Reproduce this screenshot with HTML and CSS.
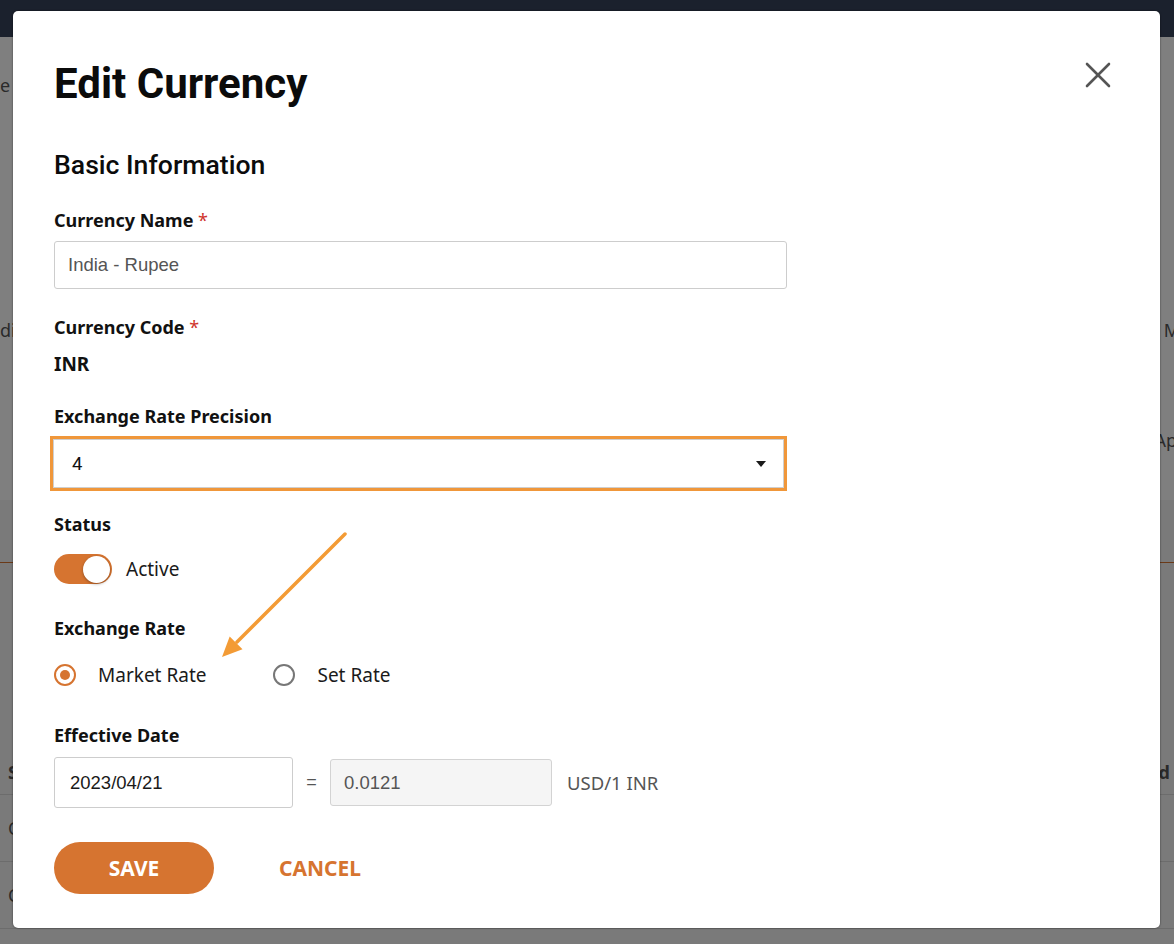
FILE: index.html
```html
<!DOCTYPE html>
<html lang="en">
<head>
<meta charset="utf-8">
<title>Edit Currency</title>
<link rel="stylesheet" href="styles.css">
</head>
<body>
<div class="page">
  <header class="topbar"></header>
  <section class="card">
    <div class="bg-row r1"><span>e</span></div>
    <div class="bg-row r2"><span>di</span><span>M</span></div>
    <div class="bg-row r3"><span></span><span>Ap</span></div>
  </section>
  <section class="lower">
    <div class="tabline"></div>
    <div class="thead"><span>S</span><span>d</span></div>
    <div class="trow"><span>C</span></div>
    <div class="trow"><span>C</span></div>
  </section>
</div>
<div class="overlay"></div>

<div class="modal">
  <div class="modal-head">
    <h1 class="title">Edit Currency</h1>
    <svg class="close" width="26" height="26" viewBox="0 0 26 26" aria-label="Close">
      <line x1="2" y1="2" x2="24" y2="24"/>
      <line x1="24" y1="2" x2="2" y2="24"/>
    </svg>
  </div>
  <h2 class="section-title">Basic Information</h2>

  <div class="label m-name">Currency Name <span class="req">*</span></div>
  <div class="input name-input">India - Rupee</div>

  <div class="label m-code">Currency Code <span class="req">*</span></div>
  <div class="value">INR</div>

  <div class="label m-prec">Exchange Rate Precision</div>
  <div class="select">
    <span>4</span>
    <span class="caret"></span>
  </div>

  <div class="label m-status">Status</div>
  <div class="switch-row">
    <div class="switch"><div class="knob"></div></div>
    <span class="opt-text">Active</span>
  </div>

  <div class="label m-rate">Exchange Rate</div>
  <div class="radio-row">
    <div class="radio-opt">
      <span class="radio checked"><span class="dot"></span></span>
      <span class="opt-text">Market Rate</span>
    </div>
    <div class="radio-opt">
      <span class="radio"></span>
      <span class="opt-text">Set Rate</span>
    </div>
  </div>

  <div class="label m-date">Effective Date</div>
  <div class="date-row">
    <div class="input date-input">2023/04/21</div>
    <span class="equals">=</span>
    <div class="input rate-input">0.0121</div>
    <span class="unit">USD/1 INR</span>
  </div>

  <div class="actions">
    <button class="btn-save">SAVE</button>
    <button class="btn-cancel">CANCEL</button>
  </div>
</div>

<svg class="annotation" width="1174" height="944" viewBox="0 0 1174 944">
  <line x1="345" y1="534" x2="237" y2="642" class="arrow-line"/>
  <polygon points="222,657 242.5,649.3 229.7,636.5" class="arrow-head"/>
</svg>
</body>
</html>
```
FILE: styles.css
```css
* { box-sizing: border-box; }
html, body { margin: 0; padding: 0; }
body {
  width: 1174px;
  height: 944px;
  overflow: hidden;
  position: relative;
  background: #ffffff;
  font-family: "Noto Sans", "Open Sans", sans-serif;
}

/* background page (dimmed) */
.page { width: 1174px; height: 944px; color: #555; font-size: 18px; line-height: 24px; }
.topbar { height: 37px; background: #36425a; }
.card { height: 463px; background: #fff; padding-top: 36px; }
.bg-row { display: flex; justify-content: space-between; }
.r2 { margin-top: 221px; }
.r3 { margin-top: 86px; }
.r3 span:last-child { margin-right: -3px; }
.r2 span:last-child { margin-right: -6px; }
.lower { height: 444px; background: #f4f4f4; padding-top: 62px; }
.tabline { height: 1px; background: #d67430; }
.thead {
  margin-top: 197px; height: 35px; padding: 0 4px 0 8px;
  display: flex; justify-content: space-between; font-weight: 700;
  border-bottom: 1px solid #d8d8d8;
}
.trow {
  height: 67px; padding: 21px 0 0 8px;
  border-bottom: 1px solid #d8d8d8;
}
.overlay { position: absolute; inset: 0; background: rgba(0,0,0,0.5); }

/* modal */
.modal {
  position: absolute;
  left: 13px; top: 11px;
  width: 1147px; height: 917px;
  background: #fff;
  border-radius: 5px;
  box-shadow: 0 0 2px rgba(0,0,0,0.6);
  padding: 48px 49px 0 41px;
  color: #111;
}
.modal-head { display: flex; justify-content: space-between; align-items: flex-start; }
.title {
  margin: 0;
  font-family: Roboto, sans-serif;
  font-weight: 700;
  font-size: 42px;
  line-height: 50px;
  color: #0b0b0b;
}
.close { margin-top: 3px; }
.close line { stroke: #555; stroke-width: 2.6; stroke-linecap: round; }
.section-title {
  margin: 40px 0 0 0;
  font-family: Roboto, sans-serif;
  font-weight: 500;
  font-size: 26.6px;
  line-height: 31px;
  color: #0b0b0b;
}

.label {
  font-weight: 700;
  font-size: 18px;
  line-height: 24px;
  color: #111;
}
.req { color: #d0342c; font-weight: 400; }
.m-name { margin-top: 28px; }
.m-code { margin-top: 26px; }
.m-prec { margin-top: 28px; }
.m-status { margin-top: 24px; }
.m-rate { margin-top: 32px; }
.m-date { margin-top: 37px; }

.input {
  border: 1px solid #cdcdcd;
  border-radius: 3px;
  background: #fff;
  font-family: "Liberation Sans", Arial, sans-serif;
  font-size: 18.5px;
  display: flex;
  align-items: center;
}
.name-input {
  margin-top: 9px;
  width: 733px;
  height: 48px;
  padding-left: 13px;
  color: #555;
}
.value {
  margin-top: 13px;
  font-weight: 700;
  font-size: 19px;
  line-height: 24px;
  color: #111;
}
.select {
  margin-top: 11px;
  margin-left: -1px;
  width: 731px;
  height: 49px;
  border: 1px solid #cfcfcf;
  outline: 3px solid #f0973a;
  display: flex;
  justify-content: space-between;
  align-items: center;
  padding: 0 17px 0 18px;
  font-family: Roboto, sans-serif;
  font-size: 18.5px;
  color: #111;
}
.caret {
  width: 0; height: 0;
  border-left: 5.5px solid transparent;
  border-right: 5.5px solid transparent;
  border-top: 6px solid #1a1a1a;
}

.switch-row { margin-top: 18px; display: flex; align-items: center; gap: 14px; height: 30px; }
.switch {
  width: 58px; height: 30px;
  border-radius: 15px;
  background: #d67430;
  display: flex; align-items: center; justify-content: flex-end;
  padding-right: 2px;
}
.knob {
  width: 27px; height: 27px; border-radius: 50%;
  background: #fff;
  box-shadow: 0 1px 3px rgba(0,0,0,0.35);
}
.opt-text { font-size: 19px; line-height: 24px; color: #1a1a1a; }

.radio-row { margin-top: 24px; display: flex; align-items: center; height: 22px; }
.radio-opt { display: flex; align-items: center; gap: 22px; }
.radio-opt + .radio-opt { margin-left: 67px; }
.radio {
  width: 22px; height: 22px; border-radius: 50%;
  border: 2px solid #777;
  display: flex; align-items: center; justify-content: center;
}
.radio.checked { border-color: #d67430; }
.dot { width: 10px; height: 10px; border-radius: 50%; background: #d67430; }

.date-row { margin-top: 10px; display: flex; align-items: center; height: 51px; }
.date-input { width: 239px; height: 51px; padding-left: 15px; color: #1a1a1a; }
.equals {
  width: 37px; text-align: center;
  font-family: "Liberation Sans", Arial, sans-serif;
  font-size: 18px; color: #555;
}
.rate-input {
  width: 222px; height: 47px; padding-left: 13px;
  background: #f5f5f5; color: #555;
  border-color: #d3d3d3;
}
.unit { margin-left: 15px; font-size: 18.5px; color: #555; }

.actions { margin-top: 34px; display: flex; align-items: center; }
.btn-save {
  width: 160px; height: 52px;
  border: none; border-radius: 26px;
  background: #d67430; color: #fff;
  font-family: "Noto Sans", sans-serif;
  font-weight: 700; font-size: 21px;
  padding: 0;
}
.btn-cancel {
  margin-left: 65px;
  border: none; background: none; padding: 0;
  color: #d67430;
  font-family: "Noto Sans", sans-serif;
  font-weight: 700; font-size: 21px;
}

.annotation { position: absolute; left: 0; top: 0; pointer-events: none; }
.arrow-line { stroke: #f39b35; stroke-width: 3.5; stroke-linecap: round; }
.arrow-head { fill: #f39b35; }
```
